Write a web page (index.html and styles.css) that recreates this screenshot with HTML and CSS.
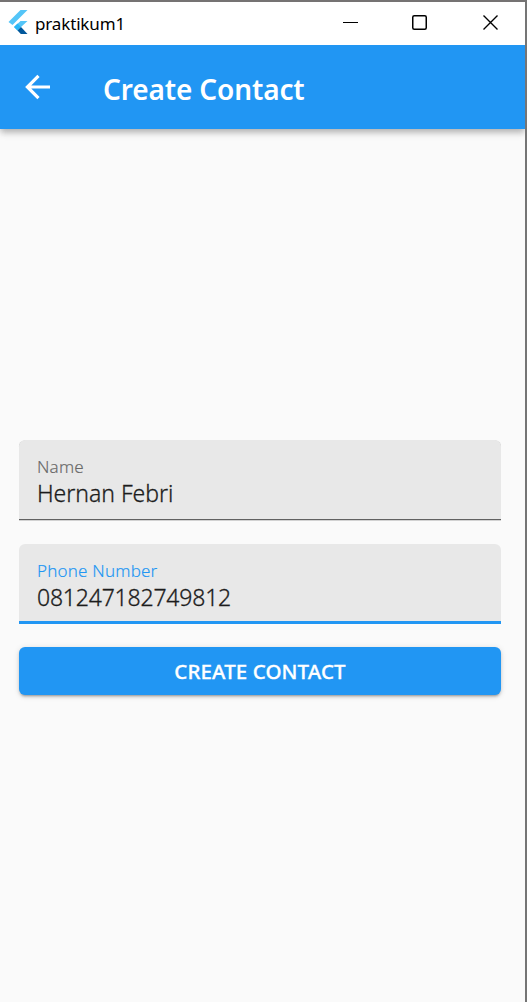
FILE: index.html
```html
<!DOCTYPE html>
<html lang="en">
<head>
<meta charset="utf-8">
<title>praktikum1</title>
<link rel="stylesheet" href="styles.css">
</head>
<body>
<div class="window">
  <header class="titlebar">
    <svg class="logo" width="20" height="24" viewBox="0 0 20 24">
      <path fill="#54c5f8" d="M12.500 0H19.500L4.500 15 0.500 12z"/>
      <path fill="#54c5f8" d="M12.500 11H19.500L13 17 9.500 20.500 6 17z"/>
      <path fill="#29b6f6" d="M6 17l3.500-3.500L13 17l-3.500 3.500z"/>
      <path fill="#01579b" d="M9.500 20.500L13 17l6.500 7h-6.700z"/>
    </svg>
    <span class="app-name">praktikum1</span>
    <div class="controls">
      <svg width="15" height="15" viewBox="0 0 15 15"><path d="M0 7.500h15"/></svg>
      <svg width="15" height="15" viewBox="0 0 15 15"><rect x=".75" y=".75" width="13.500" height="13.500" rx="1.500" stroke-width="1.500"/></svg>
      <svg width="15" height="15" viewBox="0 0 15 15"><path d="M.5.5l14 14M14.500.5l-14 14" stroke-width="1.400"/></svg>
    </div>
  </header>
  <div class="appbar">
    <svg class="back" width="26" height="26" viewBox="0 0 26 26"><path d="M25 13H3M13.500 1.900L2.400 13l11.100 11.100"/></svg>
    <h1 class="title">Create Contact</h1>
  </div>
  <main class="form">
    <label class="field">
      <span class="label">Name</span>
      <span class="value">Hernan Febri</span>
    </label>
    <label class="field focused">
      <span class="label">Phone Number</span>
      <span class="value digits">081247182749812</span>
    </label>
    <button class="submit" type="button">CREATE CONTACT</button>
  </main>
</div>
</body>
</html>
```
FILE: styles.css
```css
* { box-sizing: border-box; }
body {
  margin: 0;
  font-family: "Noto Sans", "Open Sans", sans-serif;
}
.window {
  height: 1002px;
  display: flex;
  flex-direction: column;
  overflow: hidden;
  border-top: 2px solid #757373;
  border-right: 2px solid #757575;
  background: #fafafa;
}
.titlebar {
  height: 43px;
  flex: none;
  display: flex;
  align-items: center;
  padding: 0 27px 3px 8px;
  background: #fff;
}
.app-name {
  margin: 3px 0 0 7px;
  font-size: 17px;
  line-height: 24px;
  letter-spacing: -0.15px;
  color: #000;
}
.controls {
  margin-left: auto;
  display: flex;
  gap: 55px;
}
.controls svg { fill: none; stroke: #000; }
.controls svg:nth-child(2) { margin: 0 1px 0 -1px; }
.appbar {
  height: 84px;
  flex: none;
  display: flex;
  align-items: center;
  padding-left: 24.5px;
  background: #2196f3;
  box-shadow: 0 3px 6px -1px rgba(0,0,0,.18), 0 5px 7px rgba(0,0,0,.12), 0 1px 9px rgba(0,0,0,.06);
  clip-path: inset(0 0 -20px 0);
}
.back { fill: none; stroke: #fff; stroke-width: 3.200; }
.title {
  margin: 4px 0 0 52.5px;
  font-size: 28px;
  line-height: 40px;
  font-weight: 600;
  letter-spacing: -0.13px;
  color: #fff;
}
.form {
  flex: 1;
  display: flex;
  flex-direction: column;
  gap: 23.5px;
  padding: 311px 24px 0 19px;
}
.field {
  height: 80px;
  flex: none;
  display: flex;
  flex-direction: column;
  padding: 14px 18px 0;
  border-bottom: 1.5px solid #616161;
  border-radius: 6px 6px 0 0;
  background: #e8e8e8;
  box-shadow: 0 .5px 0 #aaa;
}
.label {
  font-size: 17px;
  line-height: 26px;
  font-weight: 300;
  letter-spacing: 0.2px;
  -webkit-text-stroke: 0.15px;
  color: #686868;
}
.value {
  font-size: 23px;
  line-height: 27px;
  font-weight: 300;
  letter-spacing: -0.03px;
  -webkit-text-stroke: 0.3px;
  color: #1c1c1c;
}
.digits { letter-spacing: -0.2px; }
.focused {
  border-bottom: 3px solid #2196f3;
  box-shadow: none;
}
.focused .label { color: #2196f3; }
.submit {
  height: 48px;
  flex: none;
  border: 0;
  border-radius: 6px;
  background: #2196f3;
  color: #fff;
  font: 500 20.500px/28px "Noto Sans", sans-serif;
  letter-spacing: 0.1px;
  -webkit-text-stroke: 0.3px;
  box-shadow: 0 3px 2px -2px rgba(0,0,0,.2), 0 2px 3px rgba(0,0,0,.14), 0 1px 6px rgba(0,0,0,.12);
}
```
